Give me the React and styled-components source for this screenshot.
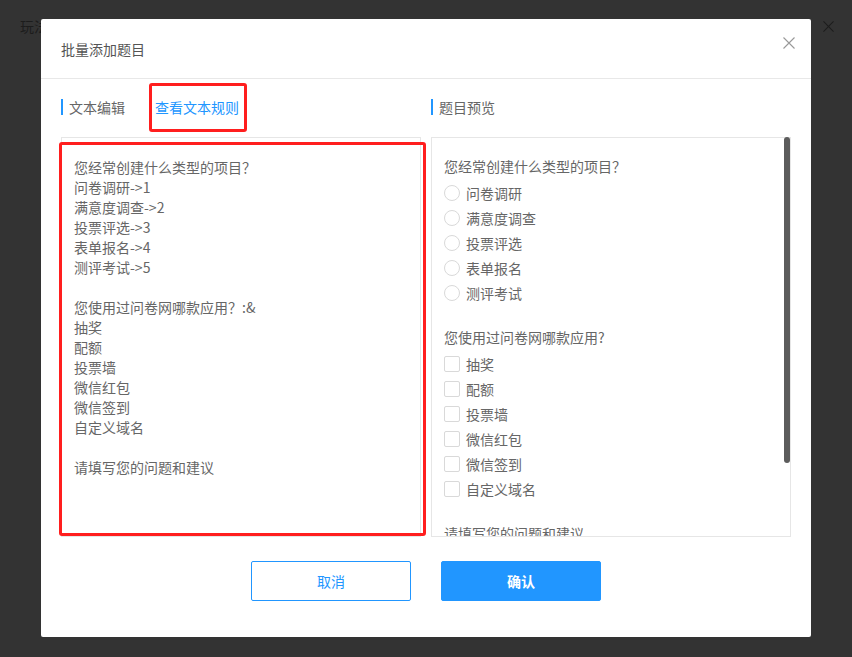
import React from "react";
import styled, { createGlobalStyle } from "styled-components";

const GlobalStyle = createGlobalStyle`
  html, body {
    margin: 0;
    padding: 0;
    background: #333333;
  }
  body {
    font-family: "Noto Sans CJK SC", "Noto Sans", sans-serif;
    font-size: 14px;
  }
`;

const SOURCE_TEXT = `您经常创建什么类型的项目？
问卷调研->1
满意度调查->2
投票评选->3
表单报名->4
测评考试->5

您使用过问卷网哪款应用？:&
抽奖
配额
投票墙
微信红包
微信签到
自定义域名

请填写您的问题和建议`;

const questions = [
  {
    title: "您经常创建什么类型的项目？",
    type: "radio",
    options: ["问卷调研", "满意度调查", "投票评选", "表单报名", "测评考试"],
  },
  {
    title: "您使用过问卷网哪款应用?",
    type: "checkbox",
    options: ["抽奖", "配额", "投票墙", "微信红包", "微信签到", "自定义域名"],
  },
];

const CloseIcon = ({ color = "#999", size = 12 }) => (
  <svg width={size} height={size} viewBox="0 0 12 12">
    <path d="M0.5 0.5 L11.5 11.5 M11.5 0.5 L0.5 11.5" stroke={color} strokeWidth="1.1" fill="none" />
  </svg>
);

const App = () => {
  return (
    <>
      <GlobalStyle />
      <Page>
        <Backdrop>
          <BackTitle>玩法</BackTitle>
          <BackClose>
            <CloseIcon color="#1c1c1c" size={11} />
          </BackClose>
        </Backdrop>
        <Modal>
          <Header>
            <Title>批量添加题目</Title>
            <CloseButton>
              <CloseIcon />
            </CloseButton>
          </Header>

          <TabsRow>
            <TabGroup>
              <TabLabel>文本编辑</TabLabel>
              <TabLink $marked>查看文本规则</TabLink>
            </TabGroup>
            <TabGroup>
              <TabLabel>题目预览</TabLabel>
            </TabGroup>
          </TabsRow>

          <Body>
            <EditorWrap>
              <Editor>{SOURCE_TEXT}</Editor>
              <Highlight />
            </EditorWrap>

            <PreviewWrap>
              <Preview>
                {questions.map((q) => (
                  <Question key={q.title}>
                    <QTitle>{q.title}</QTitle>
                    {q.options.map((opt) => (
                      <Option key={opt}>
                        <Mark $round={q.type === "radio"} />
                        <span>{opt}</span>
                      </Option>
                    ))}
                  </Question>
                ))}
                <Question>
                  <QTitle>请填写您的问题和建议</QTitle>
                  <AnswerBox />
                </Question>
              </Preview>
              <ScrollThumb />
            </PreviewWrap>
          </Body>

          <Footer>
            <Button>取消</Button>
            <Button $primary>确认</Button>
          </Footer>
        </Modal>
      </Page>
    </>
  );
};

const Page = styled.div`
  position: relative;
  box-sizing: border-box;
  width: 100vw;
  height: 100vh;
  padding-top: 19px;
  display: flex;
  align-items: flex-start;
  justify-content: center;
  overflow: hidden;
`;

const Backdrop = styled.div`
  position: absolute;
  inset: 0;
  padding: 16px 20px;
  display: flex;
  justify-content: space-between;
  align-items: flex-start;
`;

const BackTitle = styled.div`
  color: #1c1c1c;
  font-size: 14px;
  line-height: 20px;
`;

const BackClose = styled.div`
  margin-right: -2px;
`;

const Modal = styled.div`
  position: relative;
  width: 770px;
  height: 618px;
  background: #fff;
  border-radius: 2px;
  display: flex;
  flex-direction: column;
`;

const Header = styled.div`
  height: 59px;
  padding: 0 20px;
  border-bottom: 1px solid #e8e8e8;
  display: flex;
  align-items: center;
  justify-content: space-between;
`;

const Title = styled.div`
  color: #555;
  font-size: 14px;
  line-height: 20px;
`;

const CloseButton = styled.div`
  display: flex;
  margin-right: -4px;
  margin-top: -11px;
`;

const TabsRow = styled.div`
  box-sizing: border-box;
  height: 58px;
  padding: 0 20px 2px;
  display: grid;
  grid-template-columns: 360px 360px;
  column-gap: 10px;
  align-items: center;
`;

const TabGroup = styled.div`
  display: flex;
  align-items: center;
  gap: 30px;
`;

const TabLabel = styled.div`
  position: relative;
  padding-left: 8px;
  color: #666;
  font-size: 14px;
  line-height: 20px;

  &::before {
    content: "";
    position: absolute;
    left: 0;
    top: 2px;
    width: 2px;
    height: 16px;
    background: #2196ff;
  }
`;

const TabLink = styled.div`
  position: relative;
  color: #2196ff;
  font-size: 14px;
  line-height: 20px;

  &::after {
    content: ${(p) => (p.$marked ? '""' : "none")};
    position: absolute;
    top: -14px;
    bottom: -15px;
    left: -6px;
    right: -8px;
    border: 3px solid #ff1e1e;
    border-radius: 3px;
  }
`;

const Body = styled.div`
  height: 400px;
  padding: 0 20px;
  display: grid;
  grid-template-columns: 360px 360px;
  column-gap: 10px;
`;

const EditorWrap = styled.div`
  position: relative;
  display: flex;
`;

const Editor = styled.div`
  flex: 1;
  box-sizing: border-box;
  padding: 19px 12px;
  border: 1px solid #e6e6e6;
  overflow: hidden;
  white-space: pre-wrap;
  color: #666;
  font-size: 14px;
  line-height: 20px;
`;

const Highlight = styled.div`
  position: absolute;
  top: 5px;
  bottom: 1px;
  left: -2px;
  right: -5px;
  border: 3px solid #ff1e1e;
  border-radius: 3px;
  pointer-events: none;
`;

const PreviewWrap = styled.div`
  position: relative;
  display: flex;
  min-height: 0;
`;

const Preview = styled.div`
  flex: 1;
  box-sizing: border-box;
  border: 1px solid #e6e6e6;
  padding: 18px 12px 17px;
  overflow: hidden;
  display: flex;
  flex-direction: column;
  gap: 22px;
`;

const ScrollThumb = styled.div`
  position: absolute;
  top: 0;
  right: 1px;
  width: 6px;
  height: 326px;
  background: #5c5c5c;
  border-radius: 3px;
`;

const Question = styled.div`
  display: flex;
  flex-direction: column;
  flex-shrink: 0;
`;

const QTitle = styled.div`
  color: #666;
  font-size: 14px;
  line-height: 20px;
  margin-bottom: 4px;
`;

const Option = styled.div`
  height: 25px;
  display: flex;
  align-items: center;
  gap: 6px;
  color: #666;
  font-size: 14px;
  line-height: 20px;
`;

const Mark = styled.span`
  box-sizing: border-box;
  width: 16px;
  height: 16px;
  border: 1px solid #d9d9d9;
  border-radius: ${(p) => (p.$round ? "50%" : "2px")};
  background: #fff;
  flex-shrink: 0;
`;

const AnswerBox = styled.div`
  height: 60px;
  border: 1px solid #e6e6e6;
`;

const Footer = styled.div`
  flex: 1;
  display: flex;
  justify-content: center;
  align-items: flex-start;
  gap: 30px;
  padding-top: 24px;
`;

const Button = styled.button`
  box-sizing: border-box;
  width: 160px;
  height: 40px;
  border-radius: 2px;
  border: 1px solid #2196ff;
  background: ${(p) => (p.$primary ? "#2196ff" : "#fff")};
  color: ${(p) => (p.$primary ? "#fff" : "#2196ff")};
  font-family: "Noto Sans CJK SC", "Noto Sans", sans-serif;
  font-size: 14px;
  font-weight: ${(p) => (p.$primary ? 700 : 400)};
  cursor: pointer;
`;

export default App;
